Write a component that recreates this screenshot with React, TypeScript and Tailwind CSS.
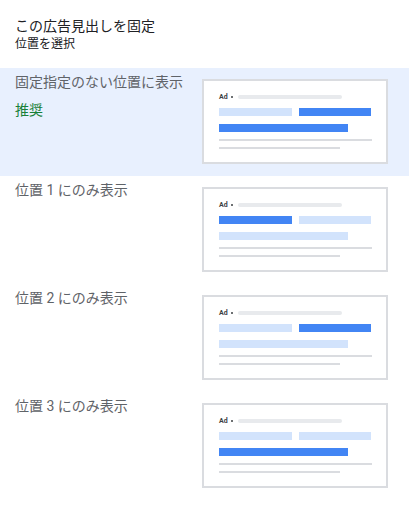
const font = { fontFamily: '"Roboto", "Noto Sans CJK JP", sans-serif' };

type Variant = 'any' | 'one' | 'two' | 'three';

function Preview({ variant }: { variant: Variant }) {
    const light = 'bg-[#d2e3fc]';
    const blue = 'bg-[#4285f4]';
    const a = variant === 'one' ? blue : light;
    const b = variant === 'any' || variant === 'two' ? blue : light;
    const c = variant === 'any' || variant === 'three' ? blue : light;

    return (
        <div className="w-[186px] h-[85px] shrink-0 bg-white border-2 border-[#dadce0] px-[15px] pt-[12px] flex flex-col">
            <div className="flex items-center h-[8px] gap-[3px]">
                <span className="text-[7px] leading-none font-bold text-[#3c4043]">Ad</span>
                <span className="w-[2px] h-[2px] bg-[#3c4043] rounded-full" />
                <span className="w-[104px] h-[4px] bg-[#e8eaed] rounded-sm ml-[2px]" />
            </div>
            <div className="flex gap-[7px] mt-[7px]">
                <div className={`w-[73px] h-[8px] ${a}`} />
                <div className={`w-[73px] h-[8px] ${b}`} />
            </div>
            <div className={`w-[129px] h-[8px] mt-[8px] ${c}`} />
            <div className="w-[153px] h-[2px] mt-[7px] bg-[#dadce0]" />
            <div className="w-[121px] h-[2px] mt-[6px] bg-[#dadce0]" />
        </div>
    );
}

function Row({ label, variant, selected, recommended }: { label: string; variant: Variant; selected?: boolean; recommended?: boolean }) {
    return (
        <div className={`h-[108px] flex justify-between pl-[15px] pr-[21px] ${selected ? 'bg-[#e8f0fe]' : 'bg-white'}`}>
            <div className="pt-[4px]">
                <div className="text-[14px] leading-[20px] text-[#5f6368]">{label}</div>
                {recommended && <div className="mt-[8px] text-[14px] leading-[20px] text-[#188038]">推奨</div>}
            </div>
            <div className="pt-[11px]">
                <Preview variant={variant} />
            </div>
        </div>
    );
}

export default function App() {
    return (
        <div className="w-[409px] h-[513px] bg-white overflow-hidden" style={font}>
            <div className="px-[15px] pt-[16px] h-[68px]">
                <div className="text-[14px] leading-[20px] text-[#202124]">この広告見出しを固定</div>
                <div className="text-[12px] leading-[16px] text-[#202124]">位置を選択</div>
            </div>
            <Row label="固定指定のない位置に表示" variant="any" selected recommended />
            <Row label="位置 1 にのみ表示" variant="one" />
            <Row label="位置 2 にのみ表示" variant="two" />
            <Row label="位置 3 にのみ表示" variant="three" />
        </div>
    );
}
